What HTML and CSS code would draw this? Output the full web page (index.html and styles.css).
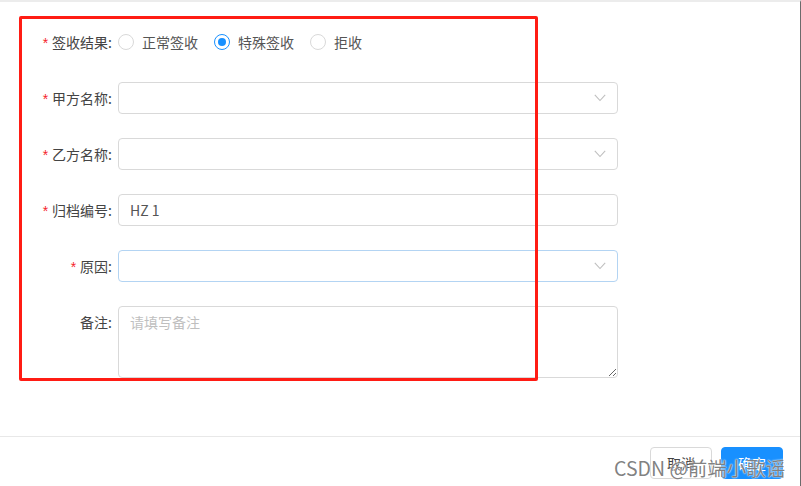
FILE: index.html
```html
<!DOCTYPE html>
<html lang="zh-CN">
<head>
<meta charset="utf-8">
<title>签收</title>
<link rel="stylesheet" href="styles.css">
</head>
<body>
<div class="page">
  <div class="modal-body">
    <form class="form">
      <div class="item">
        <label class="label required">签收结果:</label>
        <div class="control radios">
          <span class="radio"><span class="circle"></span><span class="rtext">正常签收</span></span>
          <span class="radio checked"><span class="circle"></span><span class="rtext">特殊签收</span></span>
          <span class="radio"><span class="circle"></span><span class="rtext">拒收</span></span>
        </div>
      </div>
      <div class="item">
        <label class="label required">甲方名称:</label>
        <div class="control"><div class="select"><span class="value"></span><svg class="arrow" width="12" height="8" viewBox="0 0 12 8"><path d="M0.8 0.8 L6 6.5 L11.2 0.8" fill="none" stroke="#bfbfbf" stroke-width="1.1"/></svg></div></div>
      </div>
      <div class="item">
        <label class="label required">乙方名称:</label>
        <div class="control"><div class="select"><span class="value"></span><svg class="arrow" width="12" height="8" viewBox="0 0 12 8"><path d="M0.8 0.8 L6 6.5 L11.2 0.8" fill="none" stroke="#bfbfbf" stroke-width="1.1"/></svg></div></div>
      </div>
      <div class="item">
        <label class="label required">归档编号:</label>
        <div class="control"><div class="input">HZ 1</div></div>
      </div>
      <div class="item">
        <label class="label required">原因:</label>
        <div class="control"><div class="select focused"><span class="value"></span><svg class="arrow" width="12" height="8" viewBox="0 0 12 8"><path d="M0.8 0.8 L6 6.5 L11.2 0.8" fill="none" stroke="#bfbfbf" stroke-width="1.1"/></svg></div></div>
      </div>
      <div class="item last">
        <label class="label">备注:</label>
        <div class="control"><textarea class="textarea" placeholder="请填写备注"></textarea></div>
      </div>
    </form>
  </div>
  <div class="modal-footer">
    <button class="btn" type="button">取消</button>
    <button class="btn primary" type="button">确定</button>
  </div>
  <div class="highlight"></div>
  <div class="watermark">CSDN @前端小歌谣</div>
</div>
</body>
</html>
```

FILE: styles.css
```css
* { box-sizing: border-box; }
html, body { margin: 0; padding: 0; background: #fff; }
body {
  font-family: "Noto Sans CJK SC", "Noto Sans", sans-serif;
  font-size: 14px;
  color: #555;
}
.page {
  position: relative;
  width: 801px;
  height: 486px;
  border-top: 2px solid #ececec;
  border-right: 1px solid #6b6b6b;
  overflow: hidden;
}
.modal-body {
  padding: 24px 0 0 0;
  height: 434px;
}
.form { display: flex; flex-direction: column; }
.item {
  display: flex;
  align-items: flex-start;
  margin-bottom: 24px;
}
.item.last { margin-bottom: 0; }
.label {
  width: 118px;
  flex: none;
  text-align: right;
  padding-right: 6px;
  height: 32px;
  line-height: 32px;
  color: #444;
  font-size: 14px;
  white-space: nowrap;
}
.label.required::before {
  content: "*";
  color: #f5222d;
  margin-right: 4px;
  font-family: "Liberation Sans", sans-serif;
  font-size: 14px;
}
.control { width: 500px; flex: none; }
.radios {
  display: flex;
  align-items: center;
  height: 32px;
}
.radio {
  display: inline-flex;
  align-items: center;
  margin-right: 8px;
}
.circle {
  width: 16px;
  height: 16px;
  border: 1px solid #d9d9d9;
  border-radius: 50%;
  position: relative;
  flex: none;
}
.radio.checked .circle { border-color: #1890ff; }
.radio.checked .circle::after {
  content: "";
  position: absolute;
  left: 3px;
  top: 3px;
  width: 8px;
  height: 8px;
  border-radius: 50%;
  background: #1890ff;
}
.rtext { padding: 0 8px; color: #555; line-height: 22px; }
.select, .input {
  height: 32px;
  border: 1px solid #d9d9d9;
  border-radius: 4px;
  display: flex;
  align-items: center;
  padding: 0 11px;
  background: #fff;
  color: #555;
}
.select { justify-content: space-between; }
.select.focused { border-color: #b3d4f3; }
.arrow { display: block; margin-top: -1px; }
.textarea {
  display: block;
  width: 500px;
  height: 72px;
  border: 1px solid #d9d9d9;
  border-radius: 4px;
  padding: 4px 11px;
  font-family: "Noto Sans CJK SC", "Noto Sans", sans-serif;
  font-size: 14px;
  line-height: 22px;
  color: #555;
  resize: vertical;
  outline: none;
}
.textarea::placeholder { color: #bfbfbf; }
.modal-footer {
  border-top: 1px solid #e8e8e8;
  padding: 10px 17px 0 0;
  display: flex;
  justify-content: flex-end;
  gap: 9px;
}
.btn {
  height: 32px;
  padding: 0 16px;
  border: 1px solid #d9d9d9;
  border-radius: 4px;
  background: #fff;
  color: #444;
  font-family: "Noto Sans CJK SC", "Noto Sans", sans-serif;
  font-size: 14px;
  line-height: 30px;
}
.btn.primary {
  background: #1890ff;
  border-color: #1890ff;
  color: #fff;
}
.highlight {
  position: absolute;
  left: 19px;
  top: 14px;
  width: 519px;
  height: 365px;
  border: 3px solid #ff1c14;
  border-radius: 2px;
  pointer-events: none;
}
.watermark {
  position: absolute;
  left: 614px;
  top: 451px;
  font-family: "Noto Sans CJK SC", "Noto Sans", sans-serif;
  font-size: 19.5px;
  line-height: 30px;
  color: rgba(95, 95, 95, 0.8);
  text-shadow: 0 0 1px #fff, 0 0 2px #fff;
  white-space: nowrap;
  pointer-events: none;
}
```
